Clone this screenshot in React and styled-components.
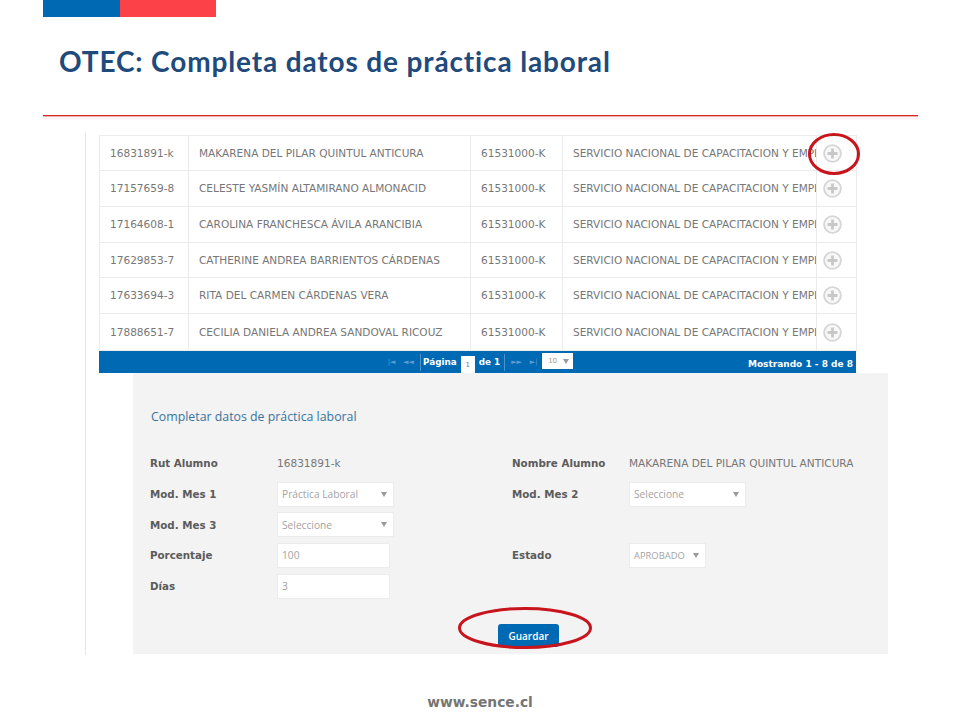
import styled, { createGlobalStyle } from "styled-components";

const GlobalStyle = createGlobalStyle`
  html, body {
    margin: 0;
    padding: 0;
    background: #fff;
  }
`

const ROWS = [
  { rut: "16831891-k", name: "MAKARENA DEL PILAR QUINTUL ANTICURA", height: 35 },
  { rut: "17157659-8", name: "CELESTE YASMÍN ALTAMIRANO ALMONACID", height: 36 },
  { rut: "17164608-1", name: "CAROLINA FRANCHESCA ÁVILA ARANCIBIA", height: 36 },
  { rut: "17629853-7", name: "CATHERINE ANDREA BARRIENTOS CÁRDENAS", height: 35 },
  { rut: "17633694-3", name: "RITA DEL CARMEN CÁRDENAS VERA", height: 36 },
  { rut: "17888651-7", name: "CECILIA DANIELA ANDREA SANDOVAL RICOUZ", height: 37 },
]

const COLUMNS = [89, 282, 92, 254, 40]

// STYLED COMPONENTS
const Slide = styled.div`
  position: relative;
  width: 960px;
  height: 720px;
  overflow: hidden;
  background: #fff;
  font-family: "DejaVu Sans", sans-serif;
`

const Flag = styled.div`
  display: flex;
  margin-left: 43px;
  height: 17px;
`

const FlagPart = styled.div`
  width: ${(p) => p.$width}px;
  background: ${(p) => p.$color};
`

const Title = styled.h1`
  margin: 26px 0 0 59px;
  height: 36px;
  font-family: "Lato", sans-serif;
  font-size: 28px;
  line-height: 36px;
  font-weight: 700;
  letter-spacing: 0.86px;
  color: #1f4a7c;
`

const Rule = styled.div`
  margin: 36px 0 0 43px;
  width: 875px;
  height: 1px;
  background: #d0281e;
  border-bottom: 1px solid #f0b4ae;
  box-shadow: 0 2px 2px #f9ecf2;
`

const Content = styled.div`
  margin: 16px 0 0 85px;
  width: 803px;
  height: 522px;
  padding: 2px 0 0 13px;
  box-sizing: border-box;
  border-left: 1px solid #e6e6e6;
`

const Table = styled.table`
  width: 757px;
  table-layout: fixed;
  border-collapse: collapse;
  font-size: 10.55px;
  color: #777;
`

const Row = styled.tr`
  height: ${(p) => p.$height}px;
`

const Cell = styled.td`
  padding: 0 0 1px 10px;
  box-sizing: border-box;
  border: 1px solid #ebebeb;
  white-space: nowrap;
  overflow: hidden;
`

const ActionCell = styled.td`
  position: relative;
  padding: 0 0 0 6px;
  border: 1px solid #ebebeb;
  line-height: 0;
`

const PlusIcon = () => (
  <svg width="19" height="19" viewBox="0 0 19 19">
    <circle cx="9.5" cy="9.5" r="8.4" fill="#f8f8f8" stroke="#d6d6d6" strokeWidth="1.9" />
    <path d="M9.5 4.5v10M4.5 9.5h10" stroke="#c8c8c8" strokeWidth="2.8" />
  </svg>
)

const Ring = styled.svg`
  position: absolute;
  left: ${(p) => p.$left}px;
  top: ${(p) => p.$top}px;
  overflow: visible;
`

const Pager = styled.div`
  display: flex;
  align-items: center;
  width: 757px;
  height: 22px;
  padding-left: 284px;
  box-sizing: border-box;
  background: #0069b4;
  color: #fff;
  font-size: 8.8px;
  font-weight: 700;
`

const PagerArrow = styled.span`
  width: 17px;
  color: #5c9dd0;
  font-size: 7px;
  font-weight: 400;
  text-align: center;
`

const PagerDivider = styled.span`
  width: 1px;
  height: 17px;
  margin: 0 ${(p) => p.$right}px 0 ${(p) => p.$left}px;
  background: #4a93cc;
`

const PageBox = styled.span`
  align-self: flex-end;
  width: 14px;
  height: 17px;
  margin: 0 4px;
  padding-top: 2px;
  box-sizing: border-box;
  background: #fff;
  color: #777;
  font-size: 7px;
  font-weight: 400;
  line-height: 15px;
  text-align: center;
`

const PageSize = styled.span`
  display: flex;
  align-items: center;
  gap: 6px;
  align-self: flex-start;
  width: 31px;
  height: 16px;
  margin-top: 2px;
  padding-left: 6px;
  box-sizing: border-box;
  background: #fff;
  color: #999;
  font-size: 7px;
  font-weight: 400;
`

const Showing = styled.span`
  margin-left: auto;
  margin-right: 3px;
  padding-top: 3px;
  font-size: 9px;
`

const Panel = styled.div`
  position: relative;
  width: 755px;
  height: 281px;
  margin-left: 34px;
  padding: 36px 0 0 17px;
  box-sizing: border-box;
  background: #f3f3f3;
`

const PanelTitle = styled.h2`
  margin: 0 0 23px 1px;
  height: 16px;
  font-family: "Open Sans", sans-serif;
  font-size: 12.35px;
  line-height: 16px;
  font-weight: 400;
  color: #38739f;
`

const FormGrid = styled.div`
  display: grid;
  grid-template-columns: 127px 235px 117px 1fr;
  grid-auto-rows: 30.7px;
  align-items: center;
`

const Label = styled.div`
  font-size: 10.3px;
  font-weight: 700;
  color: #5b5b5b;
`

const Value = styled.div`
  font-size: 10.55px;
  color: #777;
  white-space: nowrap;
`

const Field = styled.div`
  display: flex;
  align-items: center;
  justify-content: space-between;
  width: ${(p) => p.$width}px;
  height: 25px;
  padding: 0 6px 0 4px;
  box-sizing: border-box;
  background: #fff;
  border: 1px solid #ececec;
  font-family: "Open Sans", sans-serif;
  font-size: 10.2px;
  color: #a3a3a3;
`

const Caret = styled.span`
  width: 0;
  height: 0;
  border-left: 3px solid transparent;
  border-right: 3px solid transparent;
  border-top: 5px solid #999;
`

const TightText = styled.span`
  font-size: 9.4px;
`

const Actions = styled.div`
  position: relative;
  width: 61px;
  margin: 23px 0 0 348px;
`

const SaveButton = styled.button`
  display: block;
  width: 61px;
  height: 23px;
  padding: 0;
  border: 0;
  border-radius: 3px;
  background: #0069b4;
  color: #fff;
  font-family: "Open Sans", sans-serif;
  font-size: 10px;
  font-weight: 600;
`

const Footer = styled.div`
  margin-top: 39px;
  text-align: center;
  font-size: 13.8px;
  font-weight: 700;
  line-height: 16px;
  color: #757575;
`

const Select = ({ width, children }) => (
  <Field $width={width}>
    {children}
    <Caret />
  </Field>
)

export default function App() {
  return (
    <Slide>
      <GlobalStyle />
      <Flag>
        <FlagPart $width={77} $color="#0069b4" />
        <FlagPart $width={96} $color="#fd4148" />
      </Flag>
      <Title>OTEC: Completa datos de práctica laboral</Title>
      <Rule />
      <Content>
        <Table>
          <colgroup>
            {COLUMNS.map((width, i) => <col key={i} width={width} />)}
          </colgroup>
          <tbody>
            {ROWS.map(({ rut, name, height }, i) => (
              <Row key={rut} $height={height}>
                <Cell>{rut}</Cell>
                <Cell>{name}</Cell>
                <Cell>61531000-K</Cell>
                <Cell>SERVICIO NACIONAL DE CAPACITACION Y EMPLEO</Cell>
                <ActionCell>
                  <PlusIcon />
                  {i === 0 && (
                    <Ring $left={-9} $top={-3} width="52" height="42" viewBox="0 0 52 42">
                      <ellipse cx="26" cy="21" rx="24.5" ry="19.5" fill="none" stroke="#c8141c" strokeWidth="3" />
                    </Ring>
                  )}
                </ActionCell>
              </Row>
            ))}
          </tbody>
        </Table>
        <Pager>
          <PagerArrow>|◄</PagerArrow>
          <PagerArrow>◄◄</PagerArrow>
          <PagerDivider $left={3} $right={2} />
          Página
          <PageBox>1</PageBox>
          de 1
          <PagerDivider $left={4} $right={3} />
          <PagerArrow>►►</PagerArrow>
          <PagerArrow>►|</PagerArrow>
          <PageSize>10 <Caret /></PageSize>
          <Showing>Mostrando 1 - 8 de 8</Showing>
        </Pager>
        <Panel>
          <PanelTitle>Completar datos de práctica laboral</PanelTitle>
          <FormGrid>
            <Label>Rut Alumno</Label>
            <Value>16831891-k</Value>
            <Label>Nombre Alumno</Label>
            <Value>MAKARENA DEL PILAR QUINTUL ANTICURA</Value>

            <Label>Mod. Mes 1</Label>
            <Select width={117}>Práctica Laboral</Select>
            <Label>Mod. Mes 2</Label>
            <Select width={117}>Seleccione</Select>

            <Label>Mod. Mes 3</Label>
            <Select width={117}>Seleccione</Select>
            <span />
            <span />

            <Label>Porcentaje</Label>
            <Field $width={113}>100</Field>
            <Label>Estado</Label>
            <Select width={77}><TightText>APROBADO</TightText></Select>

            <Label>Días</Label>
            <Field $width={113}>3</Field>
          </FormGrid>
          <Actions>
            <SaveButton>Guardar</SaveButton>
            <Ring $left={-40} $top={-17} width="134" height="42" viewBox="0 0 134 42">
              <ellipse cx="67" cy="21" rx="65.5" ry="19.5" fill="none" stroke="#c8141c" strokeWidth="3" />
            </Ring>
          </Actions>
        </Panel>
      </Content>
      <Footer>www.sence.cl</Footer>
    </Slide>
  )
}
